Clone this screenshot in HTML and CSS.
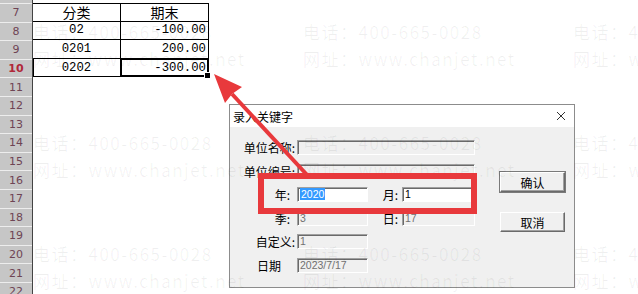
FILE: index.html
```html
<!DOCTYPE html>
<html lang="zh-CN">

<head>
  <meta charset="UTF-8">
  <title>录入关键字</title>
  <link rel="stylesheet" href="styles.css">
</head>

<body>
  <div class="sheet">
    <ul class="heads">
      <li>7</li>
      <li>8</li>
      <li>9</li>
      <li class="active">10</li>
      <li>11</li>
      <li>12</li>
      <li>13</li>
      <li>14</li>
      <li>15</li>
      <li>16</li>
      <li>17</li>
      <li>18</li>
      <li>19</li>
      <li>20</li>
      <li>21</li>
      <li>22</li>
    </ul>
    <div class="cells">
      <div class="tbl">
        <span class="mid head">分类</span>
        <span class="mid head">期末</span>
        <span class="mid num">02</span>
        <span class="right num">-100.00</span>
        <span class="mid num">0201</span>
        <span class="right num">200.00</span>
        <span class="mid num row-sel">0202</span>
        <span class="right num cell-sel">-300.00</span>
      </div>
    </div>
  </div>

  <div class="dialog">
    <header>
      <span>录入关键字</span>
      <svg class="close" width="10" height="10" viewBox="0 0 10 10">
        <path d="M1 1 L9 9 M9 1 L1 9" stroke="#333" stroke-width="1" fill="none" />
      </svg>
    </header>
    <div class="body">
      <div class="form">
        <label>单位名称:</label>
        <div class="field long"></div>

        <label>单位编号:</label>
        <div class="field long"></div>

        <label class="gap">年:</label>
        <div class="pair">
          <div class="field short white"><span class="picked">2020</span></div>
          <label>月:</label>
          <div class="field white">1</div>
        </div>

        <label class="gap">季:</label>
        <div class="pair">
          <div class="field short off">3</div>
          <label>日:</label>
          <div class="field off">17</div>
        </div>

        <label>自定义:</label>
        <div class="field short off">1</div>

        <label class="plain">日期</label>
        <div class="field short off">2023/7/17</div>
      </div>
      <div class="buttons">
        <button class="default">确认</button>
        <button>取消</button>
      </div>
    </div>
  </div>

  <div class="mark">
    <p>电话：400-665-0028<br>网址：www.chanjet.net</p>
    <p>电话：400-665-0028<br>网址：www.chanjet.net</p>
    <p>电话：400-665-0028<br>网址：www.chanjet.net</p>
    <p>电话：400-665-0028<br>网址：www.chanjet.net</p>
    <p>电话：400-665-0028<br>网址：www.chanjet.net</p>
    <p>电话：400-665-0028<br>网址：www.chanjet.net</p>
    <p>电话：400-665-0028<br>网址：www.chanjet.net</p>
    <p>电话：400-665-0028<br>网址：www.chanjet.net</p>
    <p>电话：400-665-0028<br>网址：www.chanjet.net</p>
  </div>

  <div class="redbox"></div>
  <svg class="arrow" width="638" height="294" viewBox="0 0 638 294">
    <line x1="309" y1="177" x2="232" y2="94" stroke="#e8393c" stroke-width="4" />
    <polygon points="214,74 225,103 232,94 242,87" fill="#e8393c" />
  </svg>
</body>

</html>
```

FILE: styles.css
```css
body {
  margin: 0;
  width: 638px;
  height: 294px;
  overflow: hidden;
  position: relative;
  background: #fff;
  font-family: "Noto Sans CJK SC", sans-serif;
}

/* spreadsheet */
.sheet {
  display: flex;
  height: 100%;
}

.heads {
  list-style: none;
  margin: 0;
  padding: 3px 0 0;
  width: 32px;
  flex: none;
  background: #c6c6c6;
  border-right: 1px solid #444;

  li {
    height: 18.6px;
    box-sizing: border-box;
    border-top: 1px solid #ededed;
    display: flex;
    align-items: center;
    justify-content: center;
    font: 11px "DejaVu Sans", sans-serif;
    color: #6e4454;
  }

  .active {
    color: #b0283a;
    font-weight: bold;
  }
}

.cells {
  flex: 1;
  padding-top: 3px;
}

.tbl {
  display: grid;
  grid-template-columns: 88px 88px;
  grid-auto-rows: 18.6px;

  span {
    box-sizing: border-box;
    border-right: 1px solid #000;
    border-bottom: 1px solid #000;
    display: flex;
    align-items: center;
    color: #000;
  }

  span:nth-child(-n+2) {
    border-top: 1px solid #000;
  }

  .mid {
    justify-content: center;
  }

  .right {
    justify-content: flex-end;
    padding-right: 2px;
  }

  .head {
    font-size: 14px;
  }

  .num {
    font: 12.3px "Liberation Mono", monospace;
  }

  .row-sel {
    box-shadow: inset 1px 0 #000;
  }

  .cell-sel {
    position: relative;
    box-shadow: inset 0 0 0 1px #000;
  }

  .cell-sel::after {
    content: "";
    position: absolute;
    right: -3px;
    bottom: -3px;
    width: 5px;
    height: 5px;
    background: #000;
    border: 1px solid #fff;
  }
}

/* dialog window */
.dialog {
  position: absolute;
  left: 229px;
  top: 104px;
  width: 346px;
  height: 184px;
  box-sizing: border-box;
  border: 1px solid #8c8c8c;
  background: #f0f0f0;
  font-size: 12px;
  color: #000;

  header {
    height: 22px;
    background: #fff;
    display: flex;
    align-items: center;
    justify-content: space-between;
    padding: 0 8px 0 3px;
  }
}

.body {
  display: flex;
  padding: 13px 0 0 13px;
}

.form {
  display: grid;
  grid-template-columns: 52px 178px;
  grid-auto-rows: 15px;
  column-gap: 2px;
  row-gap: 8.5px;

  label {
    text-align: right;
    line-height: 15px;
    white-space: nowrap;
  }

  .gap {
    padding-right: 5px;
  }

  .plain {
    padding-right: 14px;
  }
}

.pair {
  display: flex;

  label {
    width: 34px;
    flex: none;
    padding-right: 4px;
    box-sizing: border-box;
  }

  .field {
    flex: 1;
  }
}

.field {
  box-sizing: border-box;
  height: 15px;
  border: 1px solid;
  border-color: #a0a0a0 #fff #fff #a0a0a0;
  box-shadow: inset 1px 1px #6a6a6a;
  background: #f0f0f0;
  padding: 0 0 0 2px;
  font: 10.5px/13px "Liberation Sans", sans-serif;
  color: #000;

  &.short {
    width: 71px;
    flex: none;
  }

  &.white {
    background: #fff;
  }

  &.off {
    color: #707070;
  }
}

.picked {
  background: #3399ff;
  color: #fff;
  padding: 0 1px;
}

.buttons {
  display: flex;
  flex-direction: column;
  gap: 20px;
  margin-left: 25px;
  padding-top: 32px;

  button {
    width: 65px;
    height: 20px;
    padding: 0;
    font: 12px "Noto Sans CJK SC", sans-serif;
    color: #000;
    background: #f0f0f0;
    border: 1px solid;
    border-color: #fff #6a6a6a #6a6a6a #fff;
    box-shadow: inset -1px -1px #a0a0a0;
  }

  .default {
    outline: 1px solid #7a7a7a;
  }
}

/* watermark over everything */
.mark {
  position: absolute;
  inset: 0;
  padding: 18px 0 0 33px;
  display: grid;
  grid-template-columns: repeat(3, 270px);
  grid-auto-rows: 111px;
  pointer-events: none;

  p {
    margin: 0;
    font-size: 17px;
    line-height: 27px;
    letter-spacing: 1.5px;
    white-space: nowrap;
    color: rgba(0, 0, 0, 0.06);
  }
}

/* annotations */
.redbox {
  position: absolute;
  left: 258px;
  top: 173px;
  width: 219px;
  height: 41px;
  box-sizing: border-box;
  border: 6px solid #e8393c;
}

.arrow {
  position: absolute;
  left: 0;
  top: 0;
  pointer-events: none;
}
```
